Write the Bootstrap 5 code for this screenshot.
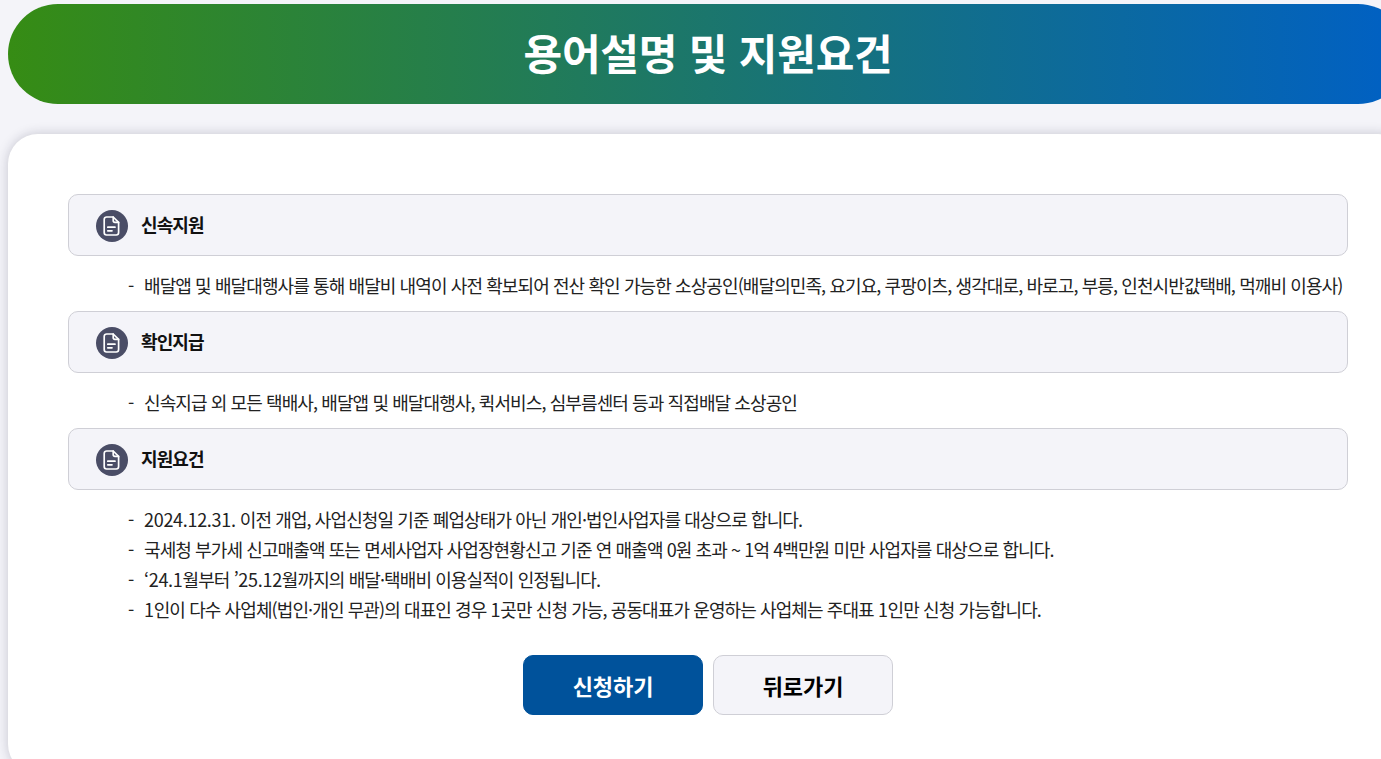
<!DOCTYPE html>
<html lang="ko">
<head>
<meta charset="utf-8">
<title>용어설명 및 지원요건</title>
<link href="https://cdn.jsdelivr.net/npm/bootstrap@5.3.0/dist/css/bootstrap.min.css" rel="stylesheet">
<style>
html,body{height:759px;overflow:hidden}
body{background:#f4f4f9;font-family:"Noto Sans CJK KR","Noto Sans",sans-serif;color:#1a1a1a}
.page-wrap{padding:4px 0 0 8px;width:1408px}
.hero{height:100px;border-radius:50px;background:linear-gradient(90deg,#368c14,#0060c5);color:#fff;font-size:42px;font-weight:700;letter-spacing:-.2px;line-height:96px;margin:0}
.sheet{background:#fff;border-radius:30px;margin-top:30px;padding:60px 60px 0 60px;height:640px;box-shadow:0 0 12px rgba(30,30,60,.22)}
.term-box{height:62px;background:#f4f4f9;border:1px solid #cfcfd6;border-radius:10px;padding-left:27px;gap:13px}
.term-icon{width:32px;height:32px;border-radius:50%;background:#4a4d66;flex:none;margin-top:1px}
.term-title{font-size:18px;font-weight:700;letter-spacing:-.9px;margin:0;color:#111}
.term-list{list-style:none;margin:0;padding:14px 0 11px 60px;font-size:18px;letter-spacing:-.9px;line-height:30px;white-space:nowrap;color:#222}
.term-list li::before{content:"-";display:inline-block;width:16px}
.num{letter-spacing:-.3px}
.action-row{gap:10px;margin-top:20px}
.action{width:180px;height:60px;border-radius:10px;font-size:22px;font-weight:700;letter-spacing:-.1px;padding:0}
.action-main{background:#00529b;border:1px solid #00529b;color:#fff}
.action-sub{background:#f4f4f9;border:1px solid #cfcfd6;color:#000}
</style>
</head>
<body>
<div class="page-wrap">
  <h1 class="hero text-center">용어설명 및 지원요건</h1>
  <main class="sheet">
    <section>
      <div class="term-box d-flex align-items-center">
        <span class="term-icon d-flex align-items-center justify-content-center"><svg width="24" height="24" viewBox="0 0 20 20" fill="none" stroke="#fff" stroke-width="1.4" stroke-linejoin="round" stroke-linecap="round"><path d="M5.5 2.500h5.500l4.500 4.500v8.500a2 2 0 0 1-2 2h-8a2 2 0 0 1-2-2v-11a2 2 0 0 1 2-2z"/><path d="M11 2.500v3a1.500 1.500 0 0 0 1.500 1.500h3"/><path d="M6.500 11h6M6.500 14h3.500"/></svg></span>
        <h2 class="term-title">신속지원</h2>
      </div>
      <ul class="term-list">
        <li>배달앱 및 배달대행사를 통해 배달비 내역이 사전 확보되어 전산 확인 가능한 소상공인(배달의민족, 요기요, 쿠팡이츠, 생각대로, 바로고, 부릉, 인천시반값택배, 먹깨비 이용사)</li>
      </ul>
    </section>
    <section>
      <div class="term-box d-flex align-items-center">
        <span class="term-icon d-flex align-items-center justify-content-center"><svg width="24" height="24" viewBox="0 0 20 20" fill="none" stroke="#fff" stroke-width="1.4" stroke-linejoin="round" stroke-linecap="round"><path d="M5.5 2.500h5.500l4.500 4.500v8.500a2 2 0 0 1-2 2h-8a2 2 0 0 1-2-2v-11a2 2 0 0 1 2-2z"/><path d="M11 2.500v3a1.500 1.500 0 0 0 1.500 1.500h3"/><path d="M6.500 11h6M6.500 14h3.500"/></svg></span>
        <h2 class="term-title">확인지급</h2>
      </div>
      <ul class="term-list">
        <li>신속지급 외 모든 택배사, 배달앱 및 배달대행사, 퀵서비스, 심부름센터 등과 직접배달 소상공인</li>
      </ul>
    </section>
    <section>
      <div class="term-box d-flex align-items-center">
        <span class="term-icon d-flex align-items-center justify-content-center"><svg width="24" height="24" viewBox="0 0 20 20" fill="none" stroke="#fff" stroke-width="1.4" stroke-linejoin="round" stroke-linecap="round"><path d="M5.5 2.500h5.500l4.500 4.500v8.500a2 2 0 0 1-2 2h-8a2 2 0 0 1-2-2v-11a2 2 0 0 1 2-2z"/><path d="M11 2.500v3a1.500 1.500 0 0 0 1.500 1.500h3"/><path d="M6.500 11h6M6.500 14h3.500"/></svg></span>
        <h2 class="term-title">지원요건</h2>
      </div>
      <ul class="term-list">
        <li><span class="num">2024.12.31.</span> 이전 개업, 사업신청일 기준 폐업상태가 아닌 개인·법인사업자를 대상으로 합니다.</li>
        <li>국세청 부가세 신고매출액 또는 면세사업자 사업장현황신고 기준 연 매출액 0원 초과 ~ 1억 4백만원 미만 사업자를 대상으로 합니다.</li>
        <li><span class="num">‘24.1</span>월부터 <span class="num">’25.12</span>월까지의 배달·택배비 이용실적이 인정됩니다.</li>
        <li><span class="num">1</span>인이 다수 사업체(법인·개인 무관)의 대표인 경우 <span class="num">1</span>곳만 신청 가능, 공동대표가 운영하는 사업체는 주대표 <span class="num">1</span>인만 신청 가능합니다.</li>
      </ul>
    </section>
    <div class="d-flex justify-content-center action-row">
      <button type="button" class="btn action action-main">신청하기</button>
      <button type="button" class="btn action action-sub">뒤로가기</button>
    </div>
  </main>
</div>
<script src="https://cdn.jsdelivr.net/npm/bootstrap@5.3.0/dist/js/bootstrap.bundle.min.js"></script>
</body>
</html>
